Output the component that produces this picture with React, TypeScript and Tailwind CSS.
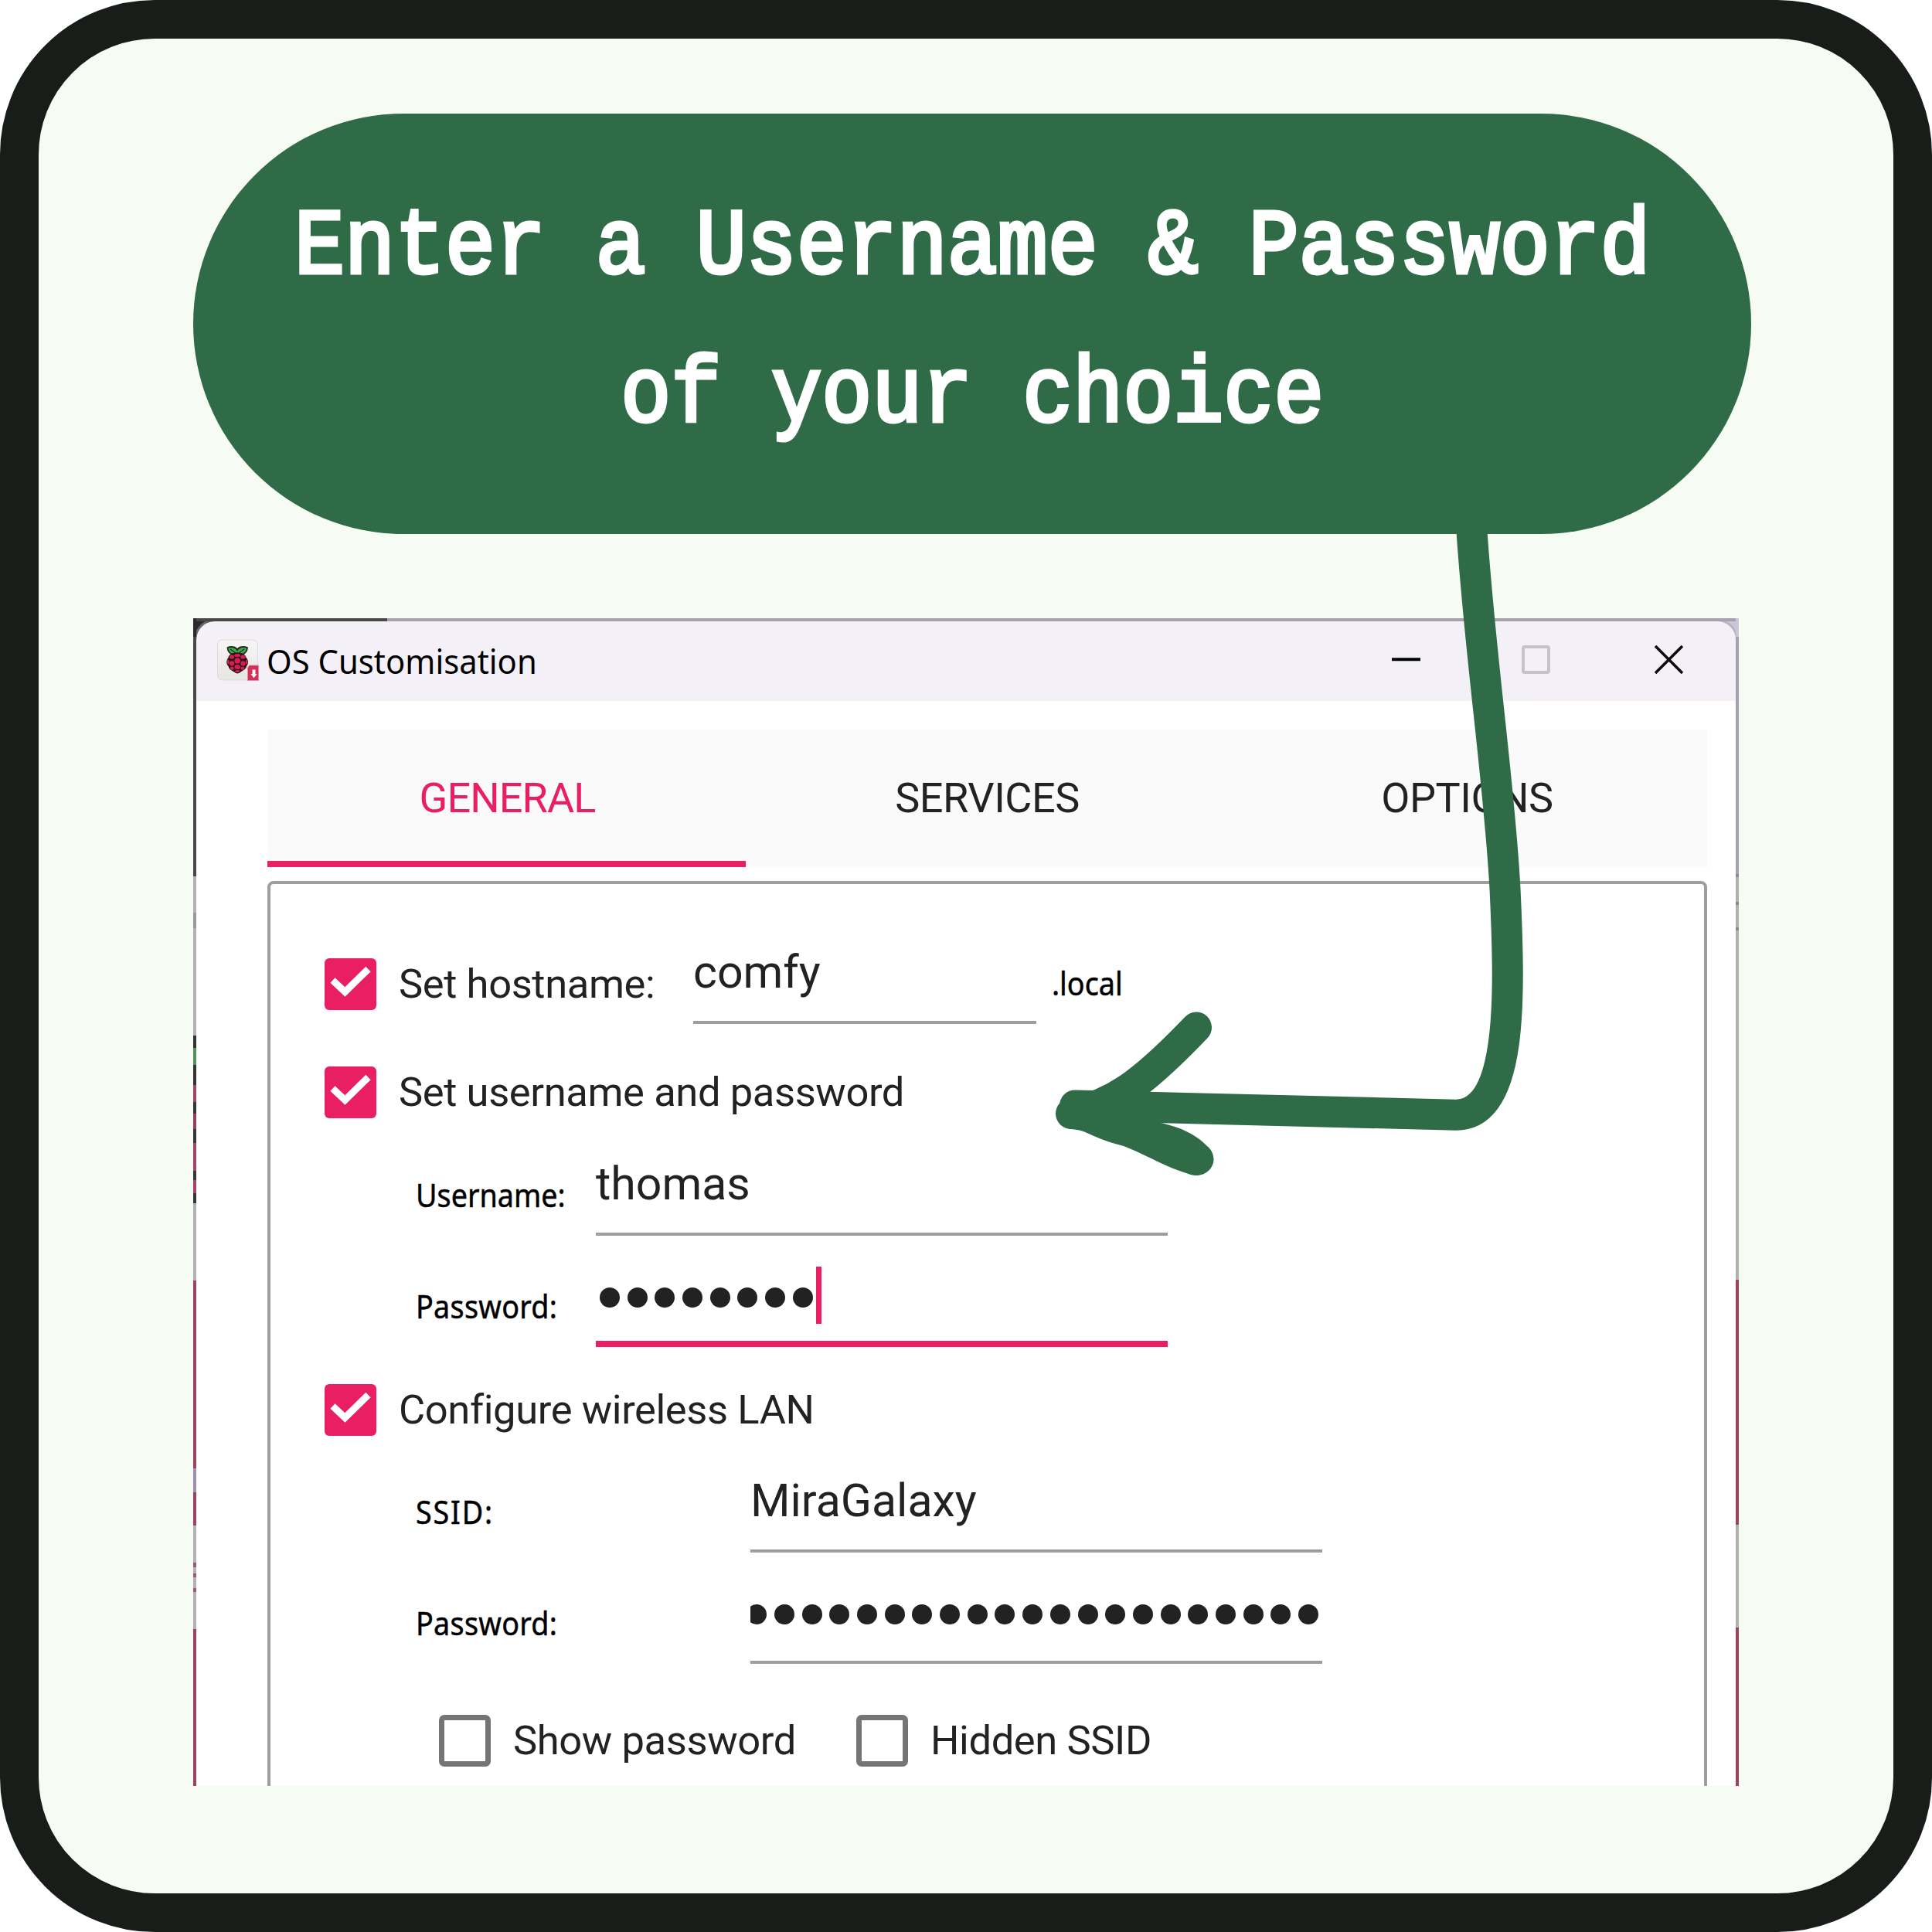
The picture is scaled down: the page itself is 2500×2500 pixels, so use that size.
import type { ReactNode } from "react";

/* Slivers of the desktop seen through the window's left and right borders. */
const leftEdge: [number, string][] = [
  [24, "bg-[#2b2b2b]"],
  [310, "bg-[#484848]"],
  [47, "bg-[#b2b2b2]"],
  [20, "bg-[#9a9a9a]"],
  [139, "bg-[#b2b2b2]"],
  [16, "bg-[#333333]"],
  [22, "bg-[#52915a]"],
  [26, "bg-[#333333]"],
  [22, "bg-[#a04562]"],
  [15, "bg-[#333836]"],
  [20, "bg-[#94405b]"],
  [18, "bg-[#333836]"],
  [36, "bg-[#a04562]"],
  [12, "bg-[#333836]"],
  [17, "bg-[#a04562]"],
  [13, "bg-[#333836]"],
  [100, "bg-[#b2b2b2]"],
  [243, "bg-[#9a4560]"],
  [31, "bg-[#a08fb4]"],
  [43, "bg-[#9a4560]"],
  [48, "bg-[#b2b2b2]"],
  [6, "bg-[#a05a72]"],
  [8, "bg-[#b2b2b2]"],
  [5, "bg-[#a05a72]"],
  [14, "bg-[#b2b2b2]"],
  [5, "bg-[#a05a72]"],
  [48, "bg-[#b2b2b2]"],
  [203, "bg-[#9a4560]"],
];

const rightEdge: [number, string][] = [
  [24, "bg-[#cbc5d9]"],
  [307, "bg-[#a5a2ae]"],
  [4, "bg-[#8c8b91]"],
  [32, "bg-[#b0b0b0]"],
  [4, "bg-[#8a8a8a]"],
  [29, "bg-[#b0b0b0]"],
  [4, "bg-[#8a8a8a]"],
  [452, "bg-[#b0b0b0]"],
  [317, "bg-[#9a4560]"],
  [133, "bg-[#b0b0b0]"],
  [205, "bg-[#9a4560]"],
];

function Edge({ parts }: { parts: [number, string][] }) {
  return (
    <div className="flex w-1 shrink-0 flex-col">
      {parts.map(([h, c], i) => (
        <div key={i} className={`shrink-0 ${c}`} style={{ height: h }} />
      ))}
    </div>
  );
}

function AppIcon() {
  return (
    <svg className="h-[70px] w-[66px] shrink-0" viewBox="0 0 66 70">
      <defs>
        <linearGradient id="tile" x1="0" y1="0" x2="0" y2="1">
          <stop offset="0" stopColor="#f7f6f5" />
          <stop offset="1" stopColor="#e6e5e1" />
        </linearGradient>
      </defs>
      <rect x="7.5" y="8" width="52" height="52" rx="6" fill="url(#tile)" stroke="#dcdae2" strokeWidth="1" />
      <path
        d="M33 25C28 29 21 26 20.500 18C25 16 31 17 33 21C35 17 41 16 46 18C45.500 26 38 29 33 25Z"
        fill="#3faa49"
        stroke="#1c2a20"
        strokeWidth="1.800"
      />
      <path d="M24 20L31 25M42 20L35 25" stroke="#1c2a20" strokeWidth="1.200" />
      <path
        d="M33 25C39 24 44 27 44.500 31C48 34 47.500 40 45 42C44 47 39 48 37.500 49.500C35 52 31.500 52 29 49.500C27 48 22.500 47 21.500 42C18.500 40 18.500 34 21.500 31C22 27 27 24 33 25Z"
        fill="#2b1119"
      />
      <g fill="#d51f50">
        <ellipse cx="33.200" cy="28" rx="4" ry="2" />
        <ellipse cx="26" cy="30" rx="3.200" ry="2.600" />
        <ellipse cx="40.500" cy="30" rx="3.200" ry="2.600" />
        <circle cx="33.200" cy="35" r="3.800" />
        <circle cx="26" cy="38.500" r="3.200" />
        <circle cx="40.500" cy="38.500" r="3.200" />
        <ellipse cx="21.200" cy="36.500" rx="1.300" ry="3" />
        <ellipse cx="45.200" cy="36.500" rx="1.300" ry="3" />
        <ellipse cx="33.200" cy="43" rx="3.800" ry="3" />
        <ellipse cx="26.300" cy="44.800" rx="2.400" ry="2.200" />
        <ellipse cx="40" cy="44.800" rx="2.400" ry="2.200" />
        <ellipse cx="33.200" cy="48.600" rx="3" ry="1.600" />
      </g>
      <path d="M48.500 41H60.500V60.500H46.500V44Z" fill="#d42f58" stroke="#e08aa0" strokeWidth="1" />
      <path d="M52.500 46.500H56.500V52H58.500L54.500 57.500L50.500 52H52.500Z" fill="#fff" />
    </svg>
  );
}

function Check() {
  return (
    <div className="size-[67px] shrink-0 rounded-[6px] bg-[#e91e63]">
      <svg viewBox="0 0 67 67" className="size-full">
        <path d="M10.500 28.500L26.400 43.500L56.500 14" fill="none" stroke="#fff" strokeWidth="9" />
      </svg>
    </div>
  );
}

function EmptyBox() {
  return <div className="size-[67px] shrink-0 rounded-[7px] border-[7px] border-[#757575]" />;
}

function RowText({ children, className = "" }: { children: ReactNode; className?: string }) {
  return (
    <div
      className={`h-[67px] whitespace-nowrap text-[52.500px] leading-[67px] tracking-[-0.400px] text-[#222] ${className}`}
    >
      {children}
    </div>
  );
}

function SmallText({ children, className = "" }: { children: ReactNode; className?: string }) {
  return (
    <div className={`shrink-0 pl-0.5 pt-8 ${className}`}>
      <div className="w-max origin-left scale-x-[0.920] whitespace-nowrap font-['Noto_Sans',sans-serif] text-[41px] leading-[40px] text-black [-webkit-text-stroke:0.500px_black]">
        {children}
      </div>
    </div>
  );
}

function Field({ children, className = "" }: { children: ReactNode; className?: string }) {
  return (
    <div
      className={`h-[105px] shrink-0 overflow-hidden whitespace-nowrap text-[59px] leading-[75px] text-[#222] ${className}`}
    >
      {children}
    </div>
  );
}

function Dots({ count }: { count: number }) {
  return (
    <div className="flex shrink-0 gap-[9.700px]">
      {Array.from({ length: count }, (_, i) => (
        <span key={i} className="size-[26px] shrink-0 rounded-full bg-[#222]" />
      ))}
    </div>
  );
}

function Arrow() {
  return (
    <svg className="pointer-events-none absolute left-0 top-0 h-[2500px] w-[2500px]" viewBox="0 0 2500 2500">
      <g fill="none" stroke="#2e6b46" strokeWidth="40" strokeLinecap="round" strokeLinejoin="round">
        <path d="M1904 680C1915 850 1940 1010 1947.500 1150C1954 1290 1958 1443 1884 1442.700L1391 1430.500" />
        <path d="M1386 1441C1440 1428 1475 1406 1548 1329.500" />
      </g>
      <path
        d="M1386 1461C1410 1463 1408 1471 1454 1483C1480 1493 1510 1511 1538 1519C1555 1526 1570 1514 1570.500 1501C1570.500 1493 1567 1487 1562 1483C1545 1466 1525 1458 1498 1452L1400 1411L1386 1430Z"
        fill="#2e6b46"
      />
    </svg>
  );
}

export default function App() {
  return (
    <div className="relative h-[2500px] w-[2500px] overflow-hidden bg-white font-[Roboto,sans-serif]">
      <div className="h-full w-full rounded-[200px] border-[50px] border-[#191d19] bg-[#f6fbf3] pl-[200px] pt-[97px]">
        <h1 className="flex h-[544px] w-[2016px] flex-col items-center justify-center rounded-[272px] bg-[#2e6b46] pb-[4px] text-center font-['Liberation_Mono',monospace] text-[121px] font-normal leading-[192px] text-white [-webkit-text-stroke:5px_white]">
          <span className="block scale-x-[0.895] whitespace-nowrap">Enter a Username &amp; Password</span>
          <span className="block scale-x-[0.895] whitespace-nowrap">of your choice</span>
        </h1>

        <div className="mt-[109px] flex h-[1511px] w-[2000px] overflow-hidden">
          <Edge parts={leftEdge} />
          <div className="flex w-[1992px] shrink-0 flex-col bg-white">
            <div className="flex h-1 shrink-0">
              <div className="w-[247px] bg-[#484848]" />
              <div className="flex-1 bg-[#a5a2ae]" />
            </div>
            <div className="h-[103px] shrink-0 overflow-hidden bg-[linear-gradient(90deg,#2b2b2b_50%,#cbc5d9_50%)]">
              <div className="flex h-full rounded-t-[24px] bg-[linear-gradient(100deg,#f3f0f8_80%,#f5f0f8_90%)] shadow-[0_0_0_3px_#a5a2ae80]">
                <div className="ml-5 mt-4">
                  <AppIcon />
                </div>
                <div className="ml-[5px] mt-[22px] w-max origin-left scale-x-[0.973] whitespace-nowrap font-['Noto_Sans',sans-serif] text-[43px] leading-[60px] text-black">
                  OS Customisation
                </div>
                <div className="ml-auto flex pr-[68px] pt-[31px]">
                  <svg className="h-[37px] w-[37px]" viewBox="0 0 37 37">
                    <path d="M0 18.300H37" stroke="#000" strokeWidth="4" />
                  </svg>
                  <div className="ml-[131px] size-[37px] rounded-[4px] border-[4px] border-[#c5c3c9]" />
                  <svg className="ml-[135px] h-[37px] w-[37px]" viewBox="0 0 37 37">
                    <path d="M1 1L36 36M36 1L1 36" stroke="#0b0b0b" strokeWidth="3.600" />
                  </svg>
                </div>
              </div>
            </div>

            <div className="ml-[92px] mt-[37px] flex h-[178px] w-[1863px] shrink-0 bg-[#fafafa] text-[54px] leading-none tracking-[-0.500px] text-[#222]">
              <div className="relative flex flex-1 items-center justify-center tracking-[-0.900px] text-[#e91e63]">
                GENERAL
                <div className="absolute bottom-0 left-0 h-2 w-[619px] bg-[#e91e63]" />
              </div>
              <div className="flex flex-1 items-center justify-center">SERVICES</div>
              <div className="flex flex-1 items-center justify-center">OPTIONS</div>
            </div>

            <div className="ml-[92px] mt-[18px] h-[1200px] w-[1863px] shrink-0 rounded-[8px] border-[4px] border-[#9e9e9e] pt-[76px]">
              <div className="flex pl-[70px]">
                <div className="flex pt-5">
                  <Check />
                  <RowText className="ml-[29px] w-[381px]">Set hostname:</RowText>
                </div>
                <Field className="w-[444px] border-b-[4px] border-[#9e9e9e]">comfy</Field>
                <SmallText className="ml-[18px]">.local</SmallText>
              </div>

              <div className="mt-[55px] flex pl-[70px]">
                <Check />
                <RowText className="ml-[29px]">Set username and password</RowText>
              </div>

              <div className="mt-[47px] flex pl-[186px]">
                <SmallText className="w-[235px]">Username:</SmallText>
                <Field className="w-[740px] border-b-[4px] border-[#9e9e9e]">thomas</Field>
              </div>

              <div className="mt-[39px] flex pl-[186px]">
                <SmallText className="w-[235px] tracking-[0.300px]">Password:</SmallText>
                <Field className="flex w-[740px] border-b-[8px] border-[#e91e63] pl-[5px] pt-px">
                  <div className="pt-[27px]">
                    <Dots count={8} />
                  </div>
                  <div className="ml-[4px] h-[74px] w-[7px] bg-[#e91e63]" />
                </Field>
              </div>

              <div className="mt-[48px] flex pl-[70px]">
                <Check />
                <RowText className="ml-[29px]">Configure wireless LAN</RowText>
              </div>

              <div className="mt-[46px] flex pl-[186px]">
                <SmallText className="w-[435px] tracking-[2px]">SSID:</SmallText>
                <Field className="w-[740px] border-b-[4px] border-[#9e9e9e]">MiraGalaxy</Field>
              </div>

              <div className="mt-[39px] flex pl-[186px]">
                <SmallText className="w-[435px] tracking-[0.300px]">Password:</SmallText>
                <Field className="flex w-[740px] justify-end border-b-[4px] border-[#9e9e9e] pr-[5px] pt-[28px]">
                  <Dots count={21} />
                </Field>
              </div>

              <div className="mt-[66px] flex pl-[218px]">
                <EmptyBox />
                <RowText className="ml-[29px] w-[444px]">Show password</RowText>
                <EmptyBox />
                <RowText className="ml-[29px]">Hidden SSID</RowText>
              </div>
            </div>
          </div>
          <Edge parts={rightEdge} />
        </div>
      </div>
      <Arrow />
    </div>
  );
}
